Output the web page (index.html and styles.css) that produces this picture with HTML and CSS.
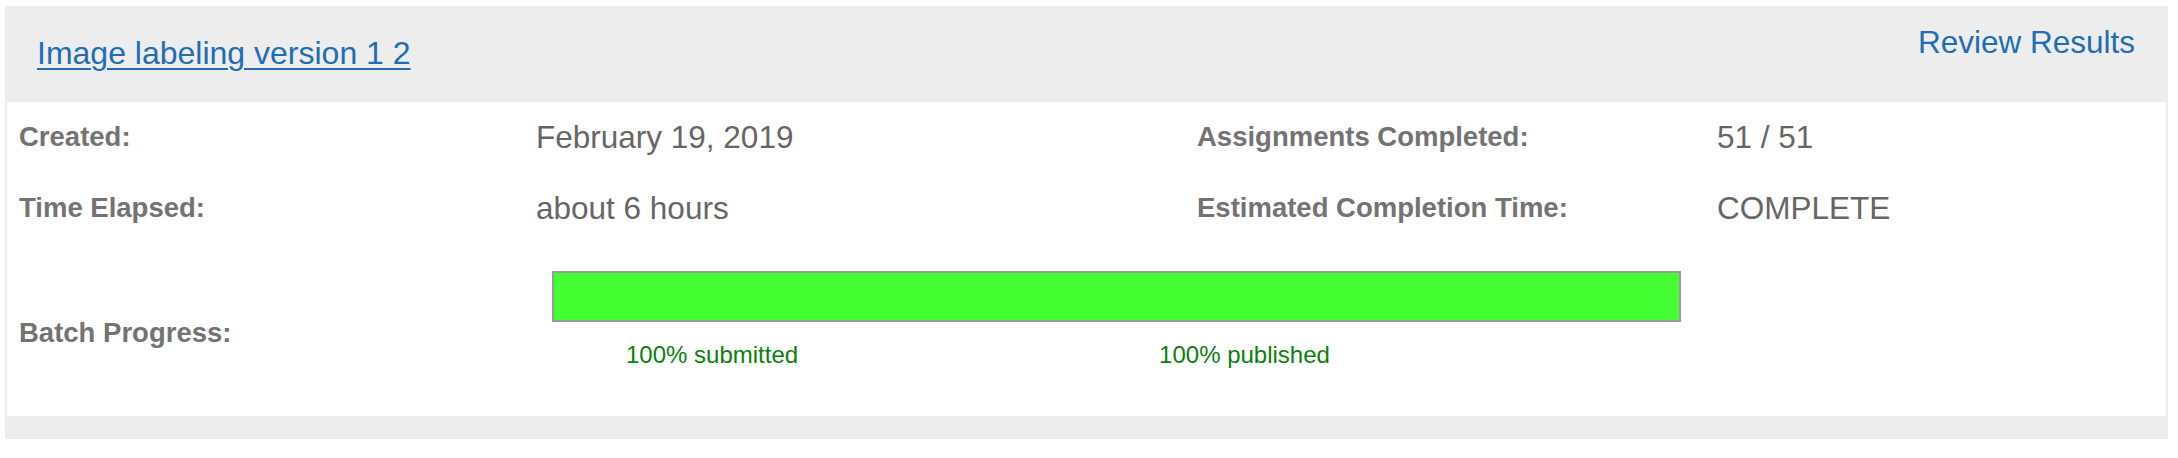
FILE: index.html
```html
<!DOCTYPE html>
<html>
<head>
<meta charset="utf-8">
<link rel="stylesheet" href="styles.css">
</head>
<body>
<div class="batch">
  <div class="batch-header">
    <a class="title" href="#">Image labeling version 1 2</a>
    <a class="review" href="#">Review Results</a>
  </div>
  <div class="batch-body">
    <div class="row row-1">
      <div class="label">Created:</div>
      <div class="value">February 19, 2019</div>
      <div class="label">Assignments Completed:</div>
      <div class="value">51 / 51</div>
    </div>
    <div class="row row-2">
      <div class="label">Time Elapsed:</div>
      <div class="value">about 6 hours</div>
      <div class="label">Estimated Completion Time:</div>
      <div class="value">COMPLETE</div>
    </div>
    <div class="row row-3">
      <div class="label">Batch Progress:</div>
      <div class="progress">
        <div class="bar"><div class="fill" style="width: 100%"></div></div>
        <div class="bar-labels">
          <span class="submitted">100% submitted</span>
          <span class="published">100% published</span>
        </div>
      </div>
    </div>
  </div>
  <div class="batch-footer"></div>
</div>
</body>
</html>
```
FILE: styles.css
```css
html, body {
  margin: 0;
  padding: 0;
  background: #fff;
}
body {
  font-family: "Liberation Sans", Arial, Helvetica, sans-serif;
}
.batch {
  margin: 6px 0 0 5px;
  width: 2163px;
  background: #ededed;
  padding: 0 2px;
  box-sizing: border-box;
}
.batch-header {
  height: 96px;
  display: flex;
  justify-content: space-between;
  align-items: flex-start;
  padding: 0 31px 0 30px;
}
.title {
  color: #1f6db3;
  font-size: 32px;
  text-decoration: underline;
  text-decoration-thickness: 2px;
  text-underline-offset: 4px;
  margin-top: 29px;
  line-height: 36px;
}
.review {
  color: #1f6db3;
  font-size: 31.5px;
  text-decoration: none;
  margin-top: 18px;
  line-height: 36px;
}
.batch-body {
  background: #fff;
  height: 314px;
  padding-left: 12px;
}
.row {
  display: grid;
  grid-template-columns: 517px 661px 520px 1fr;
  align-items: center;
}
.row-1 { height: 70px; }
.row-2 { height: 72px; }
.row-3 {
  height: 166px;
  padding-top: 6px;
  grid-template-columns: 517px 1181px 1fr;
}
.label {
  color: #737373;
  font-weight: bold;
  font-size: 27.5px;
}
.value {
  color: #666;
  font-size: 31.5px;
}
.progress {
  align-self: start;
  margin-top: 21px;
  padding-left: 16px;
}
.bar {
  width: 1129px;
  height: 51px;
  box-sizing: border-box;
  border: 2px solid #999;
  background: #fff;
}
.fill {
  height: 100%;
  background: #43ff32;
}
.bar-labels {
  display: flex;
  color: #0b7f0b;
  font-size: 24px;
  margin-top: 19px;
  padding-left: 74px;
}
.published {
  margin-left: 361px;
}
.batch-footer {
  height: 23px;
}
```
